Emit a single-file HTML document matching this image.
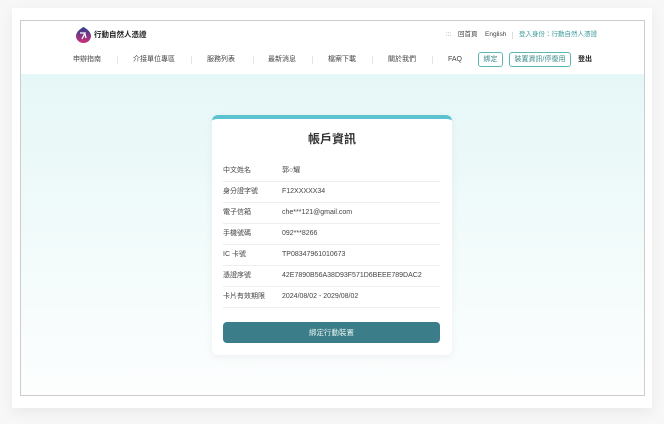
<!DOCTYPE html>
<html><head><meta charset="utf-8"><style>
*{margin:0;padding:0;box-sizing:border-box}
body{width:664px;height:424px;background:#f7f7f7;font-family:"Liberation Sans","Noto Sans CJK TC",sans-serif;position:relative;overflow:hidden}
.outer{position:absolute;left:12px;top:8px;width:640px;height:400px;background:#fff;box-shadow:0 4px 12px rgba(0,0,0,.06)}
.frame{position:absolute;left:20px;top:20px;width:625px;height:376px;border:1px solid #ccc;background:#fff;overflow:hidden}
.hdr{position:absolute;left:0;top:0;width:100%;height:53px;background:#fff}
.main{position:absolute;left:0;top:53px;width:100%;height:322px;background:linear-gradient(#e6f7f7,#fdfefe)}
.t{position:absolute;white-space:nowrap;font-size:7px;color:#444;line-height:10px;height:10px}
.sep{position:absolute;top:35px;width:1px;height:8px;background:#e4e4e4}
.btn{position:absolute;top:31px;height:15px;border:1px solid #5cb8b8;border-radius:3px;font-size:7px;color:#3b8a8a;line-height:13px;text-align:center}
.card{position:absolute;left:191px;top:94px;width:240px;height:240px;background:#fff;border-radius:6px;border-top:4px solid #5ac3cf;box-shadow:0 2px 8px rgba(0,0,0,.06)}
.row{position:absolute;left:11px;width:217px;height:21px;border-bottom:1px solid #eee;font-size:7px;color:#444;line-height:20px}
.row span{position:absolute;left:59px;top:0;line-height:20px}
</style></head><body>
<div class="outer"></div>
<div class="frame">
<div class="hdr">
<svg style="position:absolute;left:55px;top:6px" width="15" height="16" viewBox="0 0 15 16"><defs><linearGradient id="g" x1="0" y1="0" x2="0" y2="1"><stop offset="0" stop-color="#2a3f8f"/><stop offset="1" stop-color="#d0317a"/></linearGradient></defs><path d="M7.5 0 C11 2 15 5 15 9 C15 13 11.5 16 7.5 16 C3.5 16 0 13 0 9 C0 5 4 2 7.5 0Z" fill="url(#g)"/><path d="M4 6 L9 6 L6 12 M9 7 L10 11" stroke="#fff" stroke-width="1.3" fill="none"/></svg>
<div class="t" style="left:73px;top:9px;font-size:7.5px;font-weight:bold;color:#222">行動自然人憑證</div>
<div class="t" style="left:425px;top:9px;font-size:6px;color:#777">:::</div>
<div class="t" style="left:437px;top:9px;font-size:6.5px">回首頁</div>
<div class="t" style="left:464px;top:9px;font-size:6.5px">English</div>
<div style="position:absolute;left:491px;top:11px;width:1px;height:7px;background:#ddd"></div>
<div class="t" style="left:498px;top:9px;font-size:6.5px;color:#3b9a9a">登入身份：行動自然人憑證</div>
<div class="t" style="left:52px;top:34px">申辦指南</div>
<div class="sep" style="left:96px"></div>
<div class="t" style="left:112px;top:34px">介接單位專區</div>
<div class="sep" style="left:170px"></div>
<div class="t" style="left:186px;top:34px">服務列表</div>
<div class="sep" style="left:232px"></div>
<div class="t" style="left:247px;top:34px">最新消息</div>
<div class="sep" style="left:291px"></div>
<div class="t" style="left:307px;top:34px">檔案下載</div>
<div class="sep" style="left:351px"></div>
<div class="t" style="left:367px;top:34px">關於我們</div>
<div class="sep" style="left:411px"></div>
<div class="t" style="left:427px;top:34px">FAQ</div>
<div class="btn" style="left:457px;width:25px">綁定</div>
<div class="btn" style="left:488px;width:62px">裝置資訊/停復用</div>
<div class="t" style="left:557px;top:34px;font-weight:bold;color:#222">登出</div>
</div>
<div class="main"></div>
<div class="card">
<div style="position:absolute;left:0;top:12px;width:100%;text-align:center;font-size:12px;font-weight:bold;color:#333;line-height:16px">帳戶資訊</div>
<div class="row" style="top:42px">中文姓名<span>郭○耀</span></div>
<div class="row" style="top:63px">身分證字號<span>F12XXXXX34</span></div>
<div class="row" style="top:84px">電子信箱<span>che***121@gmail.com</span></div>
<div class="row" style="top:105px">手機號碼<span>092***8266</span></div>
<div class="row" style="top:126px">IC 卡號<span>TP08347961010673</span></div>
<div class="row" style="top:147px">憑證序號<span>42E7890B56A38D93F571D6BEEE789DAC2</span></div>
<div class="row" style="top:168px">卡片有效期限<span>2024/08/02 - 2029/08/02</span></div>
<div style="position:absolute;left:11px;top:203px;width:217px;height:21px;background:#3b7d88;border-radius:4px;color:#e8f4f4;font-size:7.5px;text-align:center;line-height:21px">綁定行動裝置</div>
</div>
</div>
</body></html>
